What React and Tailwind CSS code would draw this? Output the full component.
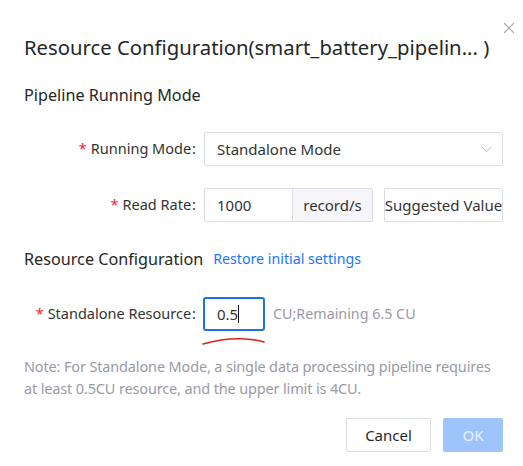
import React from "react";

const Label = ({ children }) => (
  <div className="w-[173px] shrink-0 text-right text-[14.5px] text-[#333]">
    <span className="text-[#f5222d] mr-[4px]">*</span>
    {children}
    <span className="ml-[1px] mr-[1px]">:</span>
  </div>
);

const App = () => {
  return (
    <div
      className="relative w-[523px] h-[466px] bg-white pl-[24px] pr-[20px] flex flex-col"
      style={{ fontFamily: '"Noto Sans", "Open Sans", sans-serif' }}
    >
      {/* close */}
      <button className="absolute top-[22px] right-[8px] w-[12px] h-[12px] text-[#a8a8b8]">
        <svg viewBox="0 0 12 12" className="w-[12px] h-[12px]" fill="none" stroke="currentColor" strokeWidth="1.2">
          <path d="M1 1l10 10M11 1L1 11" />
        </svg>
      </button>

      <div className="mt-[33px] h-[28px] text-[20.3px] leading-[28px] text-[#262626] whitespace-nowrap">
        Resource Configuration(smart_battery_pipelin... )
      </div>

      <div className="mt-[22px] h-[24px] text-[16.2px] leading-[24px] text-[#262626]">
        Pipeline Running Mode
      </div>

      {/* running mode */}
      <div className="mt-[25px] flex items-center gap-[7px]">
        <Label>Running Mode</Label>
        <div className="w-[299px] h-[34px] border border-[#dcdce4] rounded-[2px] flex items-center justify-between pl-[12px] pr-[10px] text-[15px] text-[#333]">
          <span>Standalone Mode</span>
          <svg viewBox="0 0 12 8" className="w-[11px] h-[7px]" fill="none" stroke="#b0b0bc" strokeWidth="1">
            <path d="M0.5 1l5.5 5.5L11.5 1" />
          </svg>
        </div>
      </div>

      {/* read rate */}
      <div className="mt-[22px] flex items-center gap-[7px]">
        <Label>Read Rate</Label>
        <div className="flex h-[34px]">
          <div className="w-[89px] border border-[#dcdce4] rounded-l-[2px] flex items-center pl-[12px] text-[15px] text-[#333]">
            1000
          </div>
          <div className="w-[80px] border border-l-0 border-[#dcdce4] bg-[#f5f5fa] rounded-r-[2px] flex items-center justify-center text-[15px] text-[#333]">
            record/s
          </div>
        </div>
        <button className="ml-[4px] w-[119px] h-[34px] border border-[#dcdce4] rounded-[2px] text-[15px] text-[#333] whitespace-nowrap flex items-center justify-center">
          Suggested Value
        </button>
      </div>

      <div className="mt-[25px] h-[24px] flex items-center gap-[10px]">
        <span className="text-[16.2px] text-[#262626]">Resource Configuration</span>
        <span className="text-[14.2px] text-[#1677ff]">Restore initial settings</span>
      </div>

      {/* standalone resource */}
      <div className="relative mt-[26px] flex items-center gap-[6px]">
        <Label>Standalone Resource</Label>
        <div className="w-[62px] h-[34px] border-2 border-[#1a73e8] rounded-[3px] flex items-center pl-[12px] text-[15px] text-[#333]">
          0.5<span className="inline-block w-[1px] h-[18px] bg-[#111]" />
        </div>
        <span className="ml-[2px] text-[14.3px] text-[#9a9aa6]">CU;Remaining 6.5 CU</span>
        <svg className="absolute left-[178px] top-[38px]" width="64" height="12" viewBox="0 0 64 12" fill="none">
          <path d="M1 9C12 6 24 3.5 38 3.8C48 4 56 5 62 7" stroke="#e0201a" strokeWidth="1.6" strokeLinecap="round" />
        </svg>
      </div>

      <div className="mt-[24px] text-[14.5px] tracking-[-0.15px] leading-[22px] text-[#9a9aa6] whitespace-nowrap">
        Note: For Standalone Mode, a single data processing pipeline requires
        <br />
        at least 0.5CU resource, and the upper limit is 4CU.
      </div>

      <div className="mt-[19px] flex justify-end gap-[12px]">
        <button className="w-[85px] h-[34px] border border-[#dcdce4] rounded-[2px] text-[15px] text-[#262626]">
          Cancel
        </button>
        <button className="w-[60px] h-[34px] rounded-[2px] bg-[#9ec5fb] text-[15px] text-[#e8f1ff]">
          OK
        </button>
      </div>
    </div>
  );
};

export default App;
